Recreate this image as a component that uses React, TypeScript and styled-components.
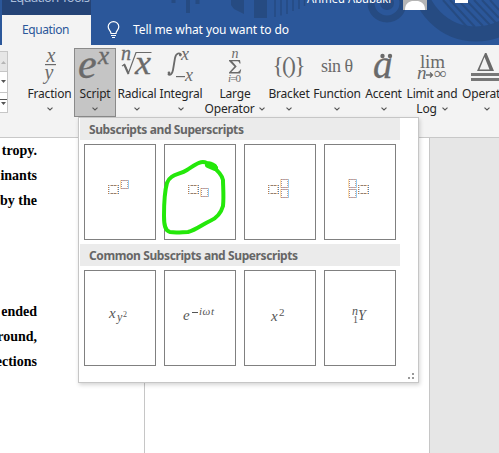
import React from "react";
import styled, { createGlobalStyle } from "styled-components";

const UI = '"Noto Sans", "Open Sans", sans-serif';
const MATH = '"Liberation Serif", "Times New Roman", serif';

const GlobalStyle = createGlobalStyle`
  * { box-sizing: border-box; }
  body { margin: 0; overflow: hidden; background: #fff; }
`;

const Window = styled.div`
  position: relative;
  width: 499px;
  height: 453px;
  overflow: hidden;
  display: flex;
  flex-direction: column;
  font-family: ${UI};
  font-size: 12px;
  color: #262626;
`;

const Header = styled.header`
  position: relative;
  flex: none;
  height: 45px;
  padding-left: 2px;
  display: flex;
  background: #2b579a;
  overflow: hidden;
`;

const HeaderArt = styled.svg`
  position: absolute;
  inset: 0;
`;

const ContextTab = styled.div`
  position: relative;
  width: 89px;
  display: flex;
  flex-direction: column;
`;

const ContextTitle = styled.div`
  height: 15px;
  background: #244376;
  color: #a9bddb;
  overflow: hidden;
  text-align: center;
  white-space: nowrap;
  font-size: 13px;
  line-height: 18px;
  padding-left: 6px;
  letter-spacing: -0.72px;
  text-indent: 0;
  & > span { display: block; margin-top: -12px; }
`;

const ActiveTab = styled.div`
  height: 30px;
  background: #f3f3f3;
  color: #2b579a;
  text-align: center;
  line-height: 30px;
  letter-spacing: -0.4px;
  padding-right: 2px;
`;

const TellMe = styled.div`
  position: relative;
  margin: 15px 0 0 16px;
  height: 30px;
  display: flex;
  gap: 13px;
  color: #fff;
  line-height: 30px;
  letter-spacing: -0.09px;
  & > svg { margin-top: 6px; }
`;

const Ribbon = styled.div`
  flex: none;
  height: 93px;
  display: flex;
  background: #f3f3f3;
  border-bottom: 1px solid #c8c8c8;
`;

const GalleryScroll = styled.div`
  width: 11px;
  height: 62px;
  margin-top: 6px;
  display: flex;
  flex-direction: column;
  border: 1px solid #c6c6c6;
  border-left: 0;
  background: #fff;
`;

const ScrollButton = styled.div<{ $off?: boolean }>`
  flex: 1;
  display: flex;
  align-items: center;
  background: ${(p) => (p.$off ? "#e6e6e6" : "#fff")};
  & + & { border-top: 1px solid #c6c6c6; }
`;

const Divider = styled.div`
  width: 1px;
  height: 84px;
  margin: 4px 7px 0 10px;
  background: #b5b5b5;
`;

const Command = styled.div<{ $w: number; $active?: boolean }>`
  flex: none;
  width: ${(p) => p.$w}px;
  height: 69px;
  margin-top: 3px;
  display: flex;
  flex-direction: column;
  align-items: center;
  background: ${(p) => (p.$active ? "#c5c5c5" : "transparent")};
  box-shadow: ${(p) => (p.$active ? "inset 0 0 0 1px #8a8a8a" : "none")};
`;

const CommandIcon = styled.svg`
  flex: none;
  display: block;
  width: 50px;
  height: 37px;
  overflow: visible;
  font-family: ${MATH};
  fill: #6a6a6a;
`;

const CommandLabel = styled.div<{ $ls: number }>`
  height: 16px;
  line-height: 17px;
  white-space: nowrap;
  letter-spacing: ${(p) => p.$ls}px;
`;

const CommandFoot = styled.div`
  height: 16px;
  display: flex;
  align-items: center;
  gap: 5px;
  white-space: nowrap;
  letter-spacing: -0.2px;
  line-height: 16px;
`;

const Workspace = styled.main`
  flex: 1;
  display: flex;
  background: #e6e6e6;
`;

const Sheet = styled.div`
  width: 430px;
  display: flex;
  background: #fff;
  border-right: 1px solid #c6c6c6;
`;

const Column = styled.div`
  width: 145px;
  border-right: 1px solid #c6c6c6;
  overflow: hidden;
`;

const Paragraph = styled.div<{ $top: number }>`
  width: 37px;
  margin-top: ${(p) => p.$top}px;
  display: flex;
  flex-direction: column;
  align-items: flex-end;
  font: bold 14px/25px ${MATH};
  color: #000;
`;

const Popup = styled.div`
  position: absolute;
  left: 78px;
  top: 117px;
  width: 341px;
  height: 266px;
  padding: 0 0 0 1px;
  background: #fff;
  border: 1px solid #c6c6c6;
  box-shadow: 1px 2px 4px rgba(0, 0, 0, 0.17);
`;

const SectionTitle = styled.div<{ $ls: number }>`
  width: 320px;
  height: 22px;
  padding-left: 9px;
  background: #ebebeb;
  color: #666;
  font-weight: bold;
  line-height: 23px;
  white-space: nowrap;
  letter-spacing: ${(p) => p.$ls}px;
`;

const TileRow = styled.div`
  display: flex;
  gap: 8px;
  padding: 4px;
  height: 104px;
`;

const Tile = styled.div`
  width: 72px;
  height: 96px;
  border: 1px solid #808080;
  & > svg {
    display: block;
    overflow: visible;
    font-family: ${MATH};
    font-style: italic;
    fill: #555;
  }
`;

const Grip = styled.svg`
  position: absolute;
  right: 4px;
  bottom: 3px;
`;

const GreenMark = styled.svg`
  position: absolute;
  left: 158px;
  top: 155px;
`;

const Chevron = () => (
  <svg width="6" height="4" viewBox="0 0 6 4" fill="none" stroke="#555" strokeWidth="1.1">
    <path d="M.5 .6 3 3 5.5 .6" />
  </svg>
);

type CommandProps = {
  w: number;
  label: string;
  second?: string;
  ls?: number;
  active?: boolean;
  children: React.ReactNode;
};

const RibbonCommand = ({ w, label, second, ls = -0.2, active, children }: CommandProps) => (
  <Command $w={w} $active={active}>
    <CommandIcon viewBox="0 0 50 37">{children}</CommandIcon>
    <CommandLabel $ls={ls}>{label}</CommandLabel>
    <CommandFoot>
      {second && <span>{second}</span>}
      <Chevron />
    </CommandFoot>
  </Command>
);

/* Dotted placeholder with the warm left / cool right fringe of subpixel rendering. */
const Slot = ({ x, y, w, h, light }: { x: number; y: number; w: number; h: number; light?: boolean }) => (
  <g fill="none" strokeWidth="1">
    <path
      d={`M${x} ${y + 0.5}h${w}M${x} ${y + h - 0.5}h${w}`}
      stroke={light ? "#a7a3b5" : "#8d7f78"}
    />
    <path
      d={`M${x + 2} ${y + 0.5}h${w - 2}M${x + 2} ${y + h - 0.5}h${w - 2}`}
      stroke={light ? "#dca48c" : "#e0b890"}
      strokeDasharray="1 2"
    />
    <path d={`M${x + 0.5} ${y}v${h}`} stroke={light ? "#ffdca6" : "#c17c45"} strokeDasharray={light ? undefined : "1 1"} />
    <path d={`M${x + 1.5} ${y + 0}v${h}`} stroke={light ? "#a08c9c" : "#a9d3f7"} strokeDasharray="1 1" />
    <path d={`M${x + w - 1.5} ${y}v${h}`} stroke={light ? "#d3a58c" : "#f0bd88"} strokeDasharray="1 1" />
    <path d={`M${x + w - 0.5} ${y}v${h}`} stroke={light ? "#94cdf5" : "#4f83bd"} strokeDasharray={light ? undefined : "1 1"} />
  </g>
);

const TileArt = ({ children }: { children: React.ReactNode }) => (
  <Tile>
    <svg width="70" height="94" viewBox="1 1 70 94">{children}</svg>
  </Tile>
);

export default function App() {
  return (
    <Window>
      <GlobalStyle />
      <Header>
        <HeaderArt width="499" height="45" fill="none" stroke="#264b82">
          <path d="M173.500 0v3M188 0v13M197.500 0v4" strokeWidth="4" />
          <path d="M231 0h13v14l-10-5-3-4z" fill="#264b82" stroke="none" />
          <path d="M260.500 0v18" strokeWidth="13" />
          <path d="M275 0v17M281 0v15.500M287 0v14M293 0v11M299 0v9M304.500 0v6" strokeWidth="1.500" />
          <circle cx="387" cy="3" r="16" strokeWidth="7" />
          <circle cx="387" cy="3" r="7" fill="#264b82" stroke="none" />
          <circle cx="476" cy="-24" r="58" strokeWidth="15" />
          <path d="M443 0l24 27M450 0l25 27M458 0l25 26M466 0l24 25M474 0l22 23M482 0l17 18M490 0l9 10" strokeWidth="2" />
          <path d="M403 0h24v10h-24z" fill="#b5b5b5" stroke="none" />
          <path d="M405 10c0-6 3-8 7-9h6c4 1 7 3 7 9z" fill="#fff" stroke="none" />
          <path d="M455 0h13v3h-13z" fill="#fff" stroke="none" />
          <text x="307" y="3" textLength="86" lengthAdjust="spacingAndGlyphs" fontSize="12" fill="#fff" stroke="none">Ahmed Abubakr</text>
        </HeaderArt>
        <ContextTab>
          <ContextTitle><span>Equation Tools</span></ContextTitle>
          <ActiveTab>Equation</ActiveTab>
        </ContextTab>
        <TellMe>
          <svg width="13" height="18" viewBox="0 0 13 18" fill="none" stroke="#fff" strokeWidth="1.200">
            <path d="M4 12.500C4 9.500 1.200 9 1.200 5.700a5.300 5 0 0 1 10.600 0C11.800 9 9 9.500 9 12.500zM4 14.500h5M5 16.500h3" />
          </svg>
          <span>Tell me what you want to do</span>
        </TellMe>
      </Header>

      <Ribbon>
        <GalleryScroll>
          <ScrollButton $off>
            <svg width="7" height="4"><path d="M1 4h5L3.500 1z" fill="#b5b5b5" /></svg>
          </ScrollButton>
          <ScrollButton>
            <svg width="7" height="4"><path d="M1 0h5L3.500 3z" fill="#555" /></svg>
          </ScrollButton>
          <ScrollButton>
            <svg width="7" height="7"><path d="M0 0h7v1H0zM1 3h5L3.500 6z" fill="#555" /></svg>
          </ScrollButton>
        </GalleryScroll>
        <Divider />
        <RibbonCommand w={49} label="Fraction">
          <g fontStyle="italic" fontSize="20" textAnchor="middle">
            <text x="26" y="14">x</text>
            <text x="24" y="31">y</text>
          </g>
          <path d="M20 16h11v1.200H20z" />
        </RibbonCommand>
        <RibbonCommand w={42} label="Script" active>
          <g fontStyle="italic" stroke="#6a6a6a" strokeWidth=".4">
            <text x="8" y="30" fontSize="42">e</text>
            <text x="28" y="16" fontSize="25">x</text>
          </g>
        </RibbonCommand>
        <RibbonCommand w={42} label="Radical">
          <g fontStyle="italic" stroke="#6a6a6a" strokeWidth=".3">
            <text x="9" y="12" fontSize="20">n</text>
            <text x="23" y="26" fontSize="33" textLength="16" lengthAdjust="spacingAndGlyphs">x</text>
          </g>
          <path d="M10 18l2.500-1.500 4 8.500L24 4.500h15.500" fill="none" stroke="#6a6a6a" strokeWidth="1.200" />
          <path d="M12 16l4.500 10" stroke="#6a6a6a" strokeWidth="2" />
        </RibbonCommand>
        <RibbonCommand w={46} label="Integral">
          <path d="M25 7c-1-3-5-2-6 3l-2 12c-.7 4-3 6-5 4" fill="none" stroke="#6a6a6a" strokeWidth="1.800" />
          <circle cx="24.300" cy="7" r="1.400" />
          <circle cx="13" cy="25" r="1.400" />
          <g fontStyle="italic" fontSize="18">
            <text x="25" y="12">x</text>
            <text x="29" y="33">x</text>
          </g>
          <path d="M20 28h9v1.200h-9z" />
        </RibbonCommand>
        <RibbonCommand w={62} label="Large" second="Operator">
          <text x="25" y="10" textAnchor="middle" fontStyle="italic" fontSize="14">n</text>
          <path d="M19 12h11l.6 3.500h-1c-.7-2-1.300-2.200-3-2.200h-4.500l4.600 5.200-5.300 5.400h5c2 0 3-.2 3.800-2.500h1l-1 4.200H19v-1l5.400-6-5.400-5.600z" />
          <text x="18" y="34" fontSize="11" textLength="13"><tspan fontStyle="italic">i</tspan>=0</text>
        </RibbonCommand>
        <RibbonCommand w={46} label="Bracket">
          <text x="8.500" y="25" fontSize="23" textLength="33">{"{()}"}</text>
        </RibbonCommand>
        <RibbonCommand w={50} label="Function">
          <text x="9" y="24" fontSize="18" textLength="32">sin θ</text>
        </RibbonCommand>
        <RibbonCommand w={43} label="Accent">
          <text x="14" y="30" fontSize="39" fontStyle="italic" stroke="#6a6a6a" strokeWidth=".3">a</text>
          <circle cx="23.500" cy="8" r="2.200" />
          <circle cx="31" cy="8" r="2.200" />
        </RibbonCommand>
        <RibbonCommand w={54} label="Limit and" second="Log">
          <text x="13" y="20" fontSize="19" textLength="25">lim</text>
          <text x="10" y="31" fontSize="19" fontStyle="italic">n</text>
          <path d="M19 27h6M23 24.500l2.500 2.500-2.500 2.500" fill="none" stroke="#6a6a6a" strokeWidth="1.300" />
          <text x="27" y="31" fontSize="17" textLength="13" lengthAdjust="spacingAndGlyphs">∞</text>
        </RibbonCommand>
        <RibbonCommand w={56} label="Operator">
          <path d="M23 5h1.500l7.500 18H15zM22.500 9L17.500 21.500h10z" fillRule="evenodd" />
          <path d="M9 25h30v3H9zM9 30h30v3H9z" fill="#777" />
        </RibbonCommand>
      </Ribbon>

      <Workspace>
        <Sheet>
          <Column>
            <Paragraph $top={0}>
              <span>tropy.</span>
              <span>inants</span>
              <span>by the</span>
            </Paragraph>
            <Paragraph $top={86}>
              <span>ended</span>
              <span>round,</span>
              <span>ections</span>
            </Paragraph>
          </Column>
        </Sheet>
      </Workspace>

      <Popup>
        <SectionTitle $ls={-0.4}>Subscripts and Superscripts</SectionTitle>
        <TileRow>
          <TileArt>
            <Slot x={24} y={41} w={11} h={9} />
            <Slot x={36} y={36} w={9} h={9} light />
          </TileArt>
          <TileArt>
            <Slot x={24} y={41} w={11} h={9} />
            <Slot x={36} y={44} w={9} h={9} light />
          </TileArt>
          <TileArt>
            <Slot x={24} y={41} w={11} h={9} />
            <Slot x={36} y={35} w={9} h={9} light />
            <Slot x={36} y={45} w={9} h={9} light />
          </TileArt>
          <TileArt>
            <Slot x={24} y={35} w={9} h={9} light />
            <Slot x={24} y={45} w={9} h={9} light />
            <Slot x={34} y={41} w={11} h={9} />
          </TileArt>
        </TileRow>
        <SectionTitle $ls={-0.4}>Common Subscripts and Superscripts</SectionTitle>
        <TileRow>
          <TileArt>
            <text x="25" y="48" fontSize="15">x</text>
            <text x="33" y="51" fontSize="12">y</text>
            <text x="39" y="47" fontSize="8" fontStyle="normal">2</text>
          </TileArt>
          <TileArt>
            <text x="19" y="50" fontSize="15">e</text>
            <path d="M28 42h6v1h-6z" />
            <text x="35" y="45" fontSize="11" textLength="15">iωt</text>
          </TileArt>
          <TileArt>
            <text x="27" y="51" fontSize="15">x</text>
            <text x="35" y="46" fontSize="11" fontStyle="normal">2</text>
          </TileArt>
          <TileArt>
            <text x="28" y="45" fontSize="12">n</text>
            <text x="29" y="53" fontSize="10" fontStyle="normal">1</text>
            <text x="34" y="50" fontSize="14">Y</text>
          </TileArt>
        </TileRow>
        <Grip width="6" height="6" fill="#999">
          <path d="M4 0h2v2H4zM0 4h2v2H0zM4 4h2v2H4z" />
        </Grip>
      </Popup>

      <GreenMark width="70" height="80" viewBox="158 155 70 80" fill="none" stroke="#24e80a" strokeWidth="4" strokeLinecap="round" strokeLinejoin="round">
        <path d="M215 166c-3-2-6-3-8-3-7-3-12 2-20 7-8 5-17 4-20 13-2 7-3 22-3 33 0 9 1 15 6 16 6 1 13 0 18 0 8-2 15-8 22-11 7-3 11-8 13-15 1-9 0-20 0-26-1-6-7-11-12-15" />
        <path d="M208 165l7 3" strokeWidth="6" />
      </GreenMark>
    </Window>
  );
}
